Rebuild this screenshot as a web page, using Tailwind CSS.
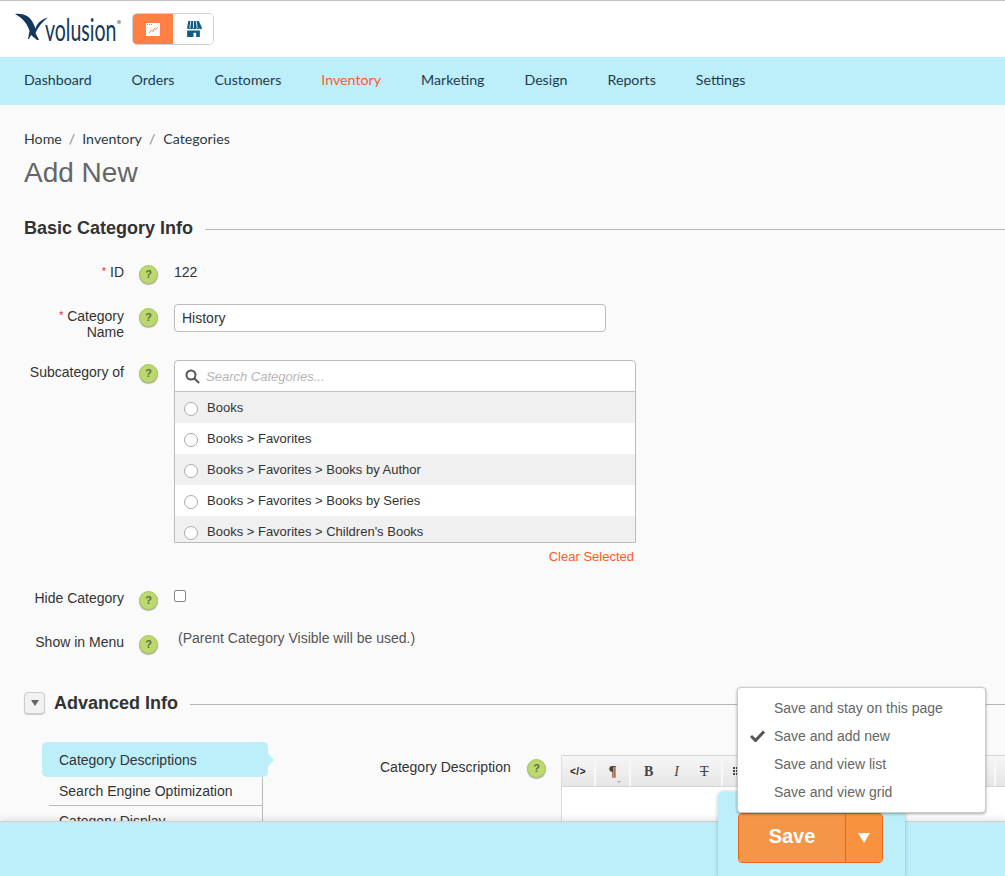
<!DOCTYPE html>
<html lang="en">
<head>
  <meta charset="UTF-8">
  <meta name="viewport" content="width=device-width, initial-scale=1.0">
  <script src="https://cdn.jsdelivr.net/npm/@tailwindcss/browser@4"></script>
  <title>Volusion - Add New Category</title>
</head>
<body class="relative h-[876px] overflow-hidden bg-[#fafafa] font-['Liberation_Sans',sans-serif] text-[14px] text-[#333]">

  <!-- header -->
  <header class="h-[57px] flex items-start bg-white border-t border-[#c4c4c4]">
    <div class="relative w-[132px] h-[56px] shrink-0">
      <svg class="absolute left-[15px] top-[12px]" width="34" height="28" viewBox="0 0 34 28">
        <path d="M0 1C8 0 14 3 17 8c1.500 2.500 2.500 5 3.500 7.500C22 10 27 6 33 4.500 27 9 23 14 20.500 20L24 27h-2l-6-5-2 4h-1l1.500-8C13 12 8 5 0 1z" fill="#12395b"/>
      </svg>
      <span class="absolute left-[45px] top-[11px] origin-left scale-x-[.65] font-['Lato',sans-serif] text-[30px] leading-[34px] text-[#12395b]">volusion</span>
      <span class="absolute left-[117px] top-[19px] w-[4px] h-[4px] rounded-full bg-[#9aa5ad]"></span>
    </div>
    <div class="flex h-[32px] mt-[12px] w-[82px] rounded-[5px] border border-[#d0d0d0] overflow-hidden">
      <div class="w-[41px] -ml-px -my-px h-[32px] bg-[#ff7f45] flex items-center justify-center">
        <svg width="14" height="13" viewBox="0 0 14 13">
          <rect width="14" height="13" fill="#fff"/>
          <path d="M1 1.500h1M3 1.500h1M5 1.500h1" stroke="#ff7f45"/>
          <path d="M3 10l2.500-3 1.500 1.500 1.500-3 1.500 1 1.500-2" stroke="#ff7f45" fill="none"/>
        </svg>
      </div>
      <div class="flex-1 bg-white flex items-center justify-center">
        <svg width="17" height="16" viewBox="0 0 16 15">
          <path d="M3 0h10l3 6.500c-.5 1.500-2.500 1.500-2.700 0-.3 1.500-2.300 1.500-2.600 0-.3 1.500-2.900 1.500-3.200 0-.3 1.500-2.300 1.500-2.700 0-.2 1.500-2.200 1.500-2.800 0z" fill="#0f5c88"/>
          <path d="M5.500 0L4.500 6.500M8 0v6.500M10.500 0l1 6.500" stroke="#fff" stroke-width=".8"/>
          <path d="M2 9h12v6h-3.500v-4h-2.500v4H2z" fill="#0f5c88"/>
        </svg>
      </div>
    </div>
  </header>

  <!-- main nav -->
  <nav class="h-[48px] bg-[#bdeffb] flex items-center gap-[40px] pl-[24px] pb-[3px] font-['Lato',sans-serif] text-[14.2px] text-[#1f3a4d]">
    <a>Dashboard</a>
    <a>Orders</a>
    <a>Customers</a>
    <a class="text-[#fa5a2a]">Inventory</a>
    <a>Marketing</a>
    <a>Design</a>
    <a>Reports</a>
    <a>Settings</a>
  </nav>

  <main class="pl-[24px]">
    <div class="flex gap-[7px] pt-[25px] h-[45px] font-['Lato',sans-serif] text-[14.2px] leading-[18px] text-[#2d3a42]">
      <span>Home</span><span class="text-[#888]">/</span><span>Inventory</span><span class="text-[#888]">/</span><span class="ml-[1px]">Categories</span>
    </div>
    <h1 class="mt-[5px] text-[28px] leading-[36px] text-[#666]">Add New</h1>

    <div class="flex items-center mt-[25px] h-[24px]">
      <h2 class="font-bold text-[18px] text-[#333] whitespace-nowrap">Basic Category Info</h2>
      <div class="ml-[12px] flex-1 h-px bg-[#b5b5b5] mt-[3px]"></div>
    </div>

    <!-- form rows -->
    <div class="flex mt-[22px] h-[38px]">
      <div class="w-[100px] text-right leading-[18px] pt-[1px]"><span class="text-[#e0202a] text-[10px] align-[2px] mr-[4px]">*</span>ID</div>
      <div class="ml-[15px] mt-[3px] w-[19px] h-[19px] rounded-full bg-[#bcd96f] border border-[#a9c862] shadow-[0_1px_1px_#aaa] flex items-center justify-center text-[11px] font-bold text-[#5e6e3c]">?</div>
      <div class="ml-[16px] leading-[18px] pt-[1px] text-[#333]">122</div>
    </div>

    <div class="flex mt-[4px] h-[56px]">
      <div class="w-[100px] text-right leading-[16px] pt-[4px]"><span class="text-[#e0202a] text-[10px] align-[2px] mr-[4px]">*</span>Category Name</div>
      <div class="ml-[15px] mt-[4px] w-[19px] h-[19px] rounded-full bg-[#bcd96f] border border-[#a9c862] shadow-[0_1px_1px_#aaa] flex items-center justify-center text-[11px] font-bold text-[#5e6e3c]">?</div>
      <div class="ml-[16px] w-[432px] h-[28px] rounded-[4px] border border-[#bbb] bg-white px-[7px] leading-[26px] text-[#333]">History</div>
    </div>

    <div class="flex">
      <div class="w-[100px] text-right leading-[18px] pt-[3px] whitespace-nowrap">Subcategory of</div>
      <div class="ml-[15px] mt-[4px] w-[19px] h-[19px] rounded-full bg-[#bcd96f] border border-[#a9c862] shadow-[0_1px_1px_#aaa] flex items-center justify-center text-[11px] font-bold text-[#5e6e3c]">?</div>
      <div class="ml-[16px] w-[462px]">
        <div class="h-[183px] rounded-t-[4px] border border-[#bbb] bg-white overflow-hidden text-[13px]">
          <div class="h-[31px] flex items-center pl-[10px] pt-[1px] border-b border-[#c4c4c4]">
            <svg width="15" height="15" viewBox="0 0 15 15" fill="none" stroke="#555" stroke-width="2"><circle cx="6" cy="6" r="4.500"/><path d="M9.500 9.500l4 4" stroke-linecap="round"/></svg>
            <span class="ml-[6px] italic text-[#b5b5b5]">Search Categories...</span>
          </div>
          <div class="h-[31px] flex items-start bg-[#f0f0f0] pl-[9px] pt-[7px]"><span class="w-[14px] h-[14px] mt-[3px] rounded-full border border-[#aaa] bg-white"></span><span class="ml-[9px] leading-[18px]">Books</span></div>
          <div class="h-[31px] flex items-start bg-white pl-[9px] pt-[7px]"><span class="w-[14px] h-[14px] mt-[3px] rounded-full border border-[#aaa] bg-white"></span><span class="ml-[9px] leading-[18px]">Books &gt; Favorites</span></div>
          <div class="h-[31px] flex items-start bg-[#f0f0f0] pl-[9px] pt-[7px]"><span class="w-[14px] h-[14px] mt-[3px] rounded-full border border-[#aaa] bg-white"></span><span class="ml-[9px] leading-[18px]">Books &gt; Favorites &gt; Books by Author</span></div>
          <div class="h-[31px] flex items-start bg-white pl-[9px] pt-[7px]"><span class="w-[14px] h-[14px] mt-[3px] rounded-full border border-[#aaa] bg-white"></span><span class="ml-[9px] leading-[18px]">Books &gt; Favorites &gt; Books by Series</span></div>
          <div class="h-[31px] flex items-start bg-[#f0f0f0] pl-[9px] pt-[7px]"><span class="w-[14px] h-[14px] mt-[3px] rounded-full border border-[#aaa] bg-white"></span><span class="ml-[9px] leading-[18px]">Books &gt; Favorites &gt; Children's Books</span></div>
        </div>
        <div class="mt-[5px] pr-[2px] text-right text-[13px] leading-[18px] text-[#ff5a1f]">Clear Selected</div>
      </div>
    </div>

    <div class="flex mt-[21px] h-[40px]">
      <div class="w-[100px] text-right leading-[18px] pt-[2px] whitespace-nowrap">Hide Category</div>
      <div class="ml-[15px] mt-[4px] w-[19px] h-[19px] rounded-full bg-[#bcd96f] border border-[#a9c862] shadow-[0_1px_1px_#aaa] flex items-center justify-center text-[11px] font-bold text-[#5e6e3c]">?</div>
      <div class="ml-[16px] mt-[3px] w-[12px] h-[12px] rounded-[2px] border border-[#888] bg-white"></div>
    </div>

    <div class="flex mt-[2px] h-[39px]">
      <div class="w-[100px] text-right leading-[18px] pt-[4px] whitespace-nowrap">Show in Menu</div>
      <div class="ml-[15px] mt-[6px] w-[19px] h-[19px] rounded-full bg-[#bcd96f] border border-[#a9c862] shadow-[0_1px_1px_#aaa] flex items-center justify-center text-[11px] font-bold text-[#5e6e3c]">?</div>
      <div class="ml-[20px] leading-[18px] text-[#555]">(Parent Category Visible will be used.)</div>
    </div>

    <div class="flex items-center mt-[23px] h-[24px]">
      <div class="w-[21px] h-[22px] rounded-[4px] border border-[#ccc] bg-[#f2f2f2] shadow-[0_1px_1px_#ccc] flex items-center justify-center">
        <span class="w-0 h-0 border-x-[4px] border-x-transparent border-t-[6px] border-t-[#666]"></span>
      </div>
      <h2 class="ml-[9px] font-bold text-[18px] text-[#333] whitespace-nowrap">Advanced Info</h2>
      <div class="ml-[12px] flex-1 h-px bg-[#b5b5b5] mt-[2px]"></div>
    </div>

    <div class="flex mt-[27px]">
      <!-- side tabs -->
      <div class="ml-[18px] w-[233px] shrink-0 relative">
        <div class="relative h-[35px] w-[226px] rounded-[5px] bg-[#bdeffb] pl-[17px] leading-[37px] text-[#333]">
          Category Descriptions
          <span class="absolute left-full top-[10px] -ml-[1px] w-0 h-0 border-y-[8px] border-y-transparent border-l-[7px] border-l-[#bdeffb]"></span>
        </div>
        <div class="ml-[7px] w-[214px] border-r border-[#bbb]">
          <div class="h-[29px] pl-[10px] leading-[28px] border-b border-[#bbb]">Search Engine Optimization</div>
          <div class="h-[31px] pl-[10px] leading-[30px]">Category Display</div>
        </div>
      </div>

      <div class="ml-[105px] w-[131px] pt-[16px] leading-[18px] whitespace-nowrap">Category Description</div>
      <div class="ml-[16px] mt-[17px] shrink-0 w-[19px] h-[19px] rounded-full bg-[#bcd96f] border border-[#a9c862] shadow-[0_1px_1px_#aaa] flex items-center justify-center text-[11px] font-bold text-[#5e6e3c]">?</div>

      <!-- editor -->
      <div class="ml-[15px] flex-1 min-w-0 mt-[13px] h-[100px] bg-white border-l border-[#ddd]">
        <div class="h-[32px] flex items-center bg-gradient-to-b from-[#f6f6f6] to-[#e6e6e6] border-y border-[#d5d5d5] text-[#444]">
          <div class="w-[34px] h-full flex items-center justify-center border-r-2 border-[#f8f8f8] font-bold text-[10px] tracking-[.5px] text-[#222]">&lt;/&gt;</div>
          <div class="relative w-[35px] h-full flex items-center justify-center border-r-2 border-[#f8f8f8] font-['Liberation_Serif',serif] font-bold text-[15px]">
            ¶
            <span class="absolute right-[8px] bottom-[3px] w-0 h-0 border-x-[2px] border-x-transparent border-t-[2px] border-t-[#aaa]"></span>
          </div>
          <div class="w-[92px] h-full flex items-center border-r-2 border-[#f8f8f8] font-['Liberation_Serif',serif] text-[14px]">
            <span class="ml-[13px] font-bold">B</span><span class="ml-[21px] italic">I</span><span class="ml-[21px] line-through">T</span>
          </div>
          <svg class="ml-[10px]" width="6" height="8" viewBox="0 0 6 8" fill="#444"><path d="M0 0h2v2H0zM3 0h2v2H3zM0 3h2v2H0zM3 3h2v2H3zM0 6h2v2H0zM3 6h2v2H3z"/></svg>
          <div class="ml-auto mr-[9px] w-[2px] h-full bg-[#f8f8f8]"></div>
        </div>
      </div>
    </div>
  </main>

  <!-- save bar -->
  <footer class="absolute inset-x-0 bottom-0 h-[55px] bg-[#bdeffb] border-t border-[#cfcfcf] shadow-[0_-3px_5px_rgba(0,0,0,.08)]"></footer>
  <div class="absolute left-[718px] top-[792px] w-[187px] h-[84px] rounded-t-[5px] bg-[#bdeffb] shadow-[0_0_4px_rgba(0,0,0,.25)]">
    <div class="flex mt-[21px] ml-[20px] w-[145px] h-[50px] rounded-[4px] border border-[#e8671c] text-white font-bold overflow-hidden">
      <div class="w-[107px] pb-[5px] bg-[#f49547] border-r border-[#e8671c] flex items-center justify-center text-[20px]">Save</div>
      <div class="flex-1 pb-[1px] bg-[#f8923f] flex items-center justify-center">
        <span class="w-0 h-0 -ml-[1px] border-x-[6px] border-x-transparent border-t-[10px] border-t-white"></span>
      </div>
    </div>
  </div>

  <!-- save options menu -->
  <div class="absolute left-[737px] top-[687px] w-[249px] h-[126px] rounded-[4px] bg-white border border-[#ccc] shadow-[0_1px_3px_rgba(0,0,0,.35)] pt-[6px] text-[#666]">
    <div class="h-[28px] pl-[36px] leading-[28px]">Save and stay on this page</div>
    <div class="relative h-[28px] pl-[36px] leading-[28px]">
      <svg class="absolute left-[12px] top-[7px]" width="15" height="13" viewBox="0 0 15 13"><path d="M1 7l4.500 4.500L14 2.500" fill="none" stroke="#555" stroke-width="3"/></svg>
      Save and add new
    </div>
    <div class="h-[28px] pl-[36px] leading-[28px]">Save and view list</div>
    <div class="h-[28px] pl-[36px] leading-[28px]">Save and view grid</div>
  </div>
</body>
</html>
